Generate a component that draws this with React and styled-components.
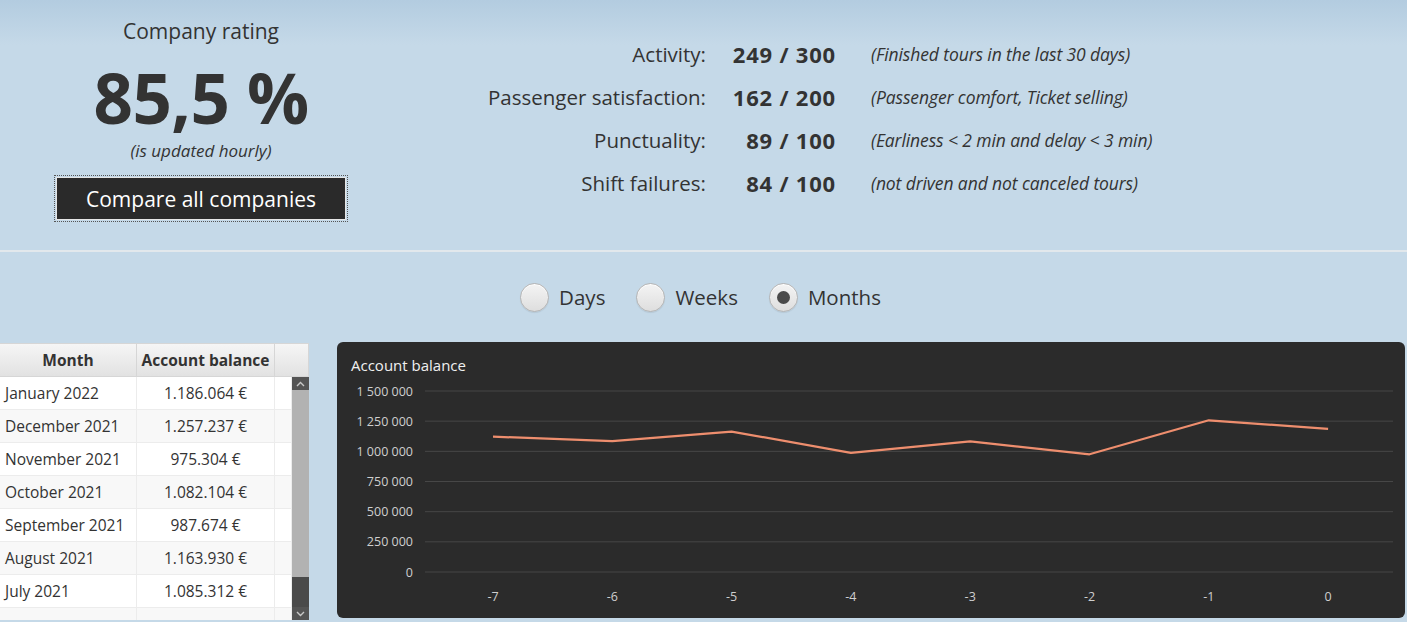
import styled, { createGlobalStyle } from "styled-components";

const GlobalStyle = createGlobalStyle`
  html, body {
    margin: 0;
    padding: 0;
  }
  body {
    font-family: "Open Sans", "Noto Sans", sans-serif;
    color: #333;
  }
`;

const Page = styled.div`
  width: 1407px;
  height: 622px;
  overflow: hidden;
  background: linear-gradient(180deg, #b3cce0 0px, #c5d9e8 45px, #c5d9e8 100%);
  display: flex;
  flex-direction: column;
`;

const Top = styled.section`
  height: 250px;
  display: flex;
`;

const RatingBox = styled.div`
  width: 402px;
  display: flex;
  flex-direction: column;
  align-items: center;
  padding-top: 17px;
`;

const RatingTitle = styled.div`
  font-size: 21px;
  line-height: 28px;
`;

const RatingValue = styled.div`
  margin-top: 20px;
  font-size: 69px;
  font-weight: 700;
  line-height: 64px;
  letter-spacing: -0.5px;
`;

const RatingNote = styled.div`
  margin-top: 11px;
  font-size: 17px;
  font-style: italic;
  line-height: 22px;
`;

const CompareButton = styled.button`
  margin-top: 15px;
  width: 290px;
  height: 43px;
  background: #2a2a2a;
  color: #fff;
  border: 1px solid #e6e6e6;
  outline: 1px dotted #555;
  outline-offset: 1px;
  font-family: inherit;
  font-size: 21px;
  cursor: pointer;
`;

const Stats = styled.div`
  margin-left: 72px;
  padding-top: 32px;
  display: grid;
  grid-template-columns: 232px 130px auto;
  grid-auto-rows: 43px;
  align-items: center;
`;

const StatLabel = styled.div`
  font-size: 20.5px;
  text-align: right;
`;

const StatValue = styled.div`
  font-size: 22px;
  font-weight: 700;
  letter-spacing: 0.8px;
  text-align: right;
`;

const StatNote = styled.div`
  padding-left: 35px;
  font-size: 17.5px;
  font-style: italic;
  letter-spacing: -0.1px;
`;

const Divider = styled.hr`
  margin: 0;
  border: none;
  height: 2px;
  background: #e2e8ec;
`;

const Bottom = styled.section`
  flex: 1;
  display: flex;
  flex-direction: column;
`;

const RadioRow = styled.div`
  height: 90px;
  display: flex;
  justify-content: center;
  align-items: center;
  gap: 31px;
  padding-right: 6px;
`;

const RadioItem = styled.label`
  display: flex;
  align-items: center;
  gap: 10px;
  font-size: 20.5px;
  cursor: pointer;
`;

const RadioCircle = styled.span`
  width: 29px;
  height: 29px;
  box-sizing: border-box;
  border-radius: 50%;
  border: 1px solid #b4b4b4;
  background: linear-gradient(180deg, #f4f4f4 0%, #dedede 100%);
  box-shadow: inset 0 1px 1px #fff, 0 1px 1px rgba(0, 0, 0, 0.08);
  display: flex;
  align-items: center;
  justify-content: center;

  &::after {
    content: "";
    width: 13px;
    height: 13px;
    border-radius: 50%;
    background: ${(p) => (p.$checked ? "#4a4a4a" : "transparent")};
  }
`;

const Content = styled.div`
  flex: 1;
  display: flex;
  gap: 28px;
  padding-right: 2px;
`;

const Table = styled.div`
  width: 309px;
  height: 277px;
  margin-top: 1px;
  background: #fff;
  display: flex;
  flex-direction: column;
  font-size: 15.5px;
`;

const HeaderRow = styled.div`
  height: 33px;
  display: grid;
  grid-template-columns: 137px 138px 34px;
  background: linear-gradient(180deg, #f6f6f6 0%, #e2e2e2 100%);
  border-bottom: 1px solid #d6d6d6;
`;

const HeaderCell = styled.div`
  font-weight: 700;
  text-align: center;
  line-height: 32px;
  border-right: 1px solid #d6d6d6;
  border-top: 1px solid #d6d6d6;
  white-space: nowrap;
`;

const Body = styled.div`
  flex: 1;
  display: flex;
  overflow: hidden;
`;

const Rows = styled.div`
  width: 292px;
`;

const Row = styled.div`
  height: 33px;
  display: grid;
  grid-template-columns: 137px 138px 17px;
  background: ${(p) => (p.$odd ? "#f8f8f8" : "#fff")};
  border-bottom: 1px solid #ececec;
  box-sizing: border-box;
`;

const Cell = styled.div`
  line-height: 32px;
  padding: 0 5px;
  text-align: ${(p) => (p.$center ? "center" : "left")};
  border-right: 1px solid #ececec;
  white-space: nowrap;
`;

const Scrollbar = styled.div`
  width: 17px;
  display: flex;
  flex-direction: column;
  background: #b2b2b2;
`;

const ScrollButton = styled.div`
  height: 13px;
  background: #545454;
  display: flex;
  align-items: center;
  justify-content: center;
`;

const ScrollTrack = styled.div`
  flex: 1;
  display: flex;
  flex-direction: column;
  justify-content: flex-end;
`;

const ScrollThumb = styled.div`
  height: 30px;
  background: #4a4a4a;
`;

const ChartPanel = styled.div`
  flex: 1;
  height: 276px;
  background: #2b2b2b;
  border-radius: 6px;
  overflow: hidden;
`;

const months = [
  ["January 2022", "1.186.064 €"],
  ["December 2021", "1.257.237 €"],
  ["November 2021", "975.304 €"],
  ["October 2021", "1.082.104 €"],
  ["September 2021", "987.674 €"],
  ["August 2021", "1.163.930 €"],
  ["July 2021", "1.085.312 €"],
  ["", ""],
];

const stats = [
  ["Activity:", "249 / 300", "(Finished tours in the last 30 days)"],
  ["Passenger satisfaction:", "162 / 200", "(Passenger comfort, Ticket selling)"],
  ["Punctuality:", "89 / 100", "(Earliness < 2 min and delay < 3 min)"],
  ["Shift failures:", "84 / 100", "(not driven and not canceled tours)"],
];

const series = [1121480, 1085312, 1163930, 987674, 1082104, 975304, 1257237, 1186064];

const Chevron = ({ up }) => (
  <svg width="9" height="6" viewBox="0 0 9 6">
    <path
      d={up ? "M1 5 L4.5 1.5 L8 5" : "M1 1 L4.5 4.5 L8 1"}
      fill="none"
      stroke="#c8c8c8"
      strokeWidth="1.4"
    />
  </svg>
);

const Chart = () => {
  const top = 49;
  const bottom = 230;
  const left = 88;
  const right = 1056;
  const yOf = (v) => bottom - (v / 1500000) * (bottom - top);
  const xOf = (i) => 156 + i * 119.3;
  const ticks = [1500000, 1250000, 1000000, 750000, 500000, 250000, 0];
  const fmt = (v) => v.toLocaleString("en-US").replace(/,/g, " ");
  const points = series.map((v, i) => `${xOf(i)},${yOf(v)}`).join(" ");

  return (
    <svg width="1068" height="276" viewBox="0 0 1068 276">
      <text x="14" y="29" fill="#f0f0f0" fontSize="15" fontFamily="Open Sans, sans-serif">
        Account balance
      </text>
      {ticks.map((t) => (
        <g key={t}>
          <line x1={left} x2={right} y1={yOf(t)} y2={yOf(t)} stroke="#474747" strokeWidth="1" />
          <text
            x="76"
            y={yOf(t) + 4.5}
            fill="#cfcfcf"
            fontSize="12.5"
            textAnchor="end"
            fontFamily="Open Sans, sans-serif"
          >
            {fmt(t)}
          </text>
        </g>
      ))}
      {series.map((_, i) => (
        <text
          key={i}
          x={xOf(i)}
          y="259"
          fill="#cfcfcf"
          fontSize="12.5"
          textAnchor="middle"
          fontFamily="Open Sans, sans-serif"
        >
          {i - 7}
        </text>
      ))}
      <polyline points={points} fill="none" stroke="#ee8e6e" strokeWidth="2.2" strokeLinejoin="round" />
    </svg>
  );
};

export default function App() {
  return (
    <>
      <GlobalStyle />
      <Page>
        <Top>
          <RatingBox>
            <RatingTitle>Company rating</RatingTitle>
            <RatingValue>85,5 %</RatingValue>
            <RatingNote>(is updated hourly)</RatingNote>
            <CompareButton>Compare all companies</CompareButton>
          </RatingBox>
          <Stats>
            {stats.map(([label, value, note]) => (
              <>
                <StatLabel key={label}>{label}</StatLabel>
                <StatValue>{value}</StatValue>
                <StatNote>{note}</StatNote>
              </>
            ))}
          </Stats>
        </Top>
        <Divider />
        <Bottom>
          <RadioRow>
            <RadioItem>
              <RadioCircle />
              Days
            </RadioItem>
            <RadioItem>
              <RadioCircle />
              Weeks
            </RadioItem>
            <RadioItem>
              <RadioCircle $checked />
              Months
            </RadioItem>
          </RadioRow>
          <Content>
            <Table>
              <HeaderRow>
                <HeaderCell>Month</HeaderCell>
                <HeaderCell>Account balance</HeaderCell>
                <HeaderCell />
              </HeaderRow>
              <Body>
                <Rows>
                  {months.map(([m, b], i) => (
                    <Row key={i} $odd={i % 2 === 1}>
                      <Cell>{m}</Cell>
                      <Cell $center>{b}</Cell>
                      <Cell />
                    </Row>
                  ))}
                </Rows>
                <Scrollbar>
                  <ScrollButton>
                    <Chevron up />
                  </ScrollButton>
                  <ScrollTrack>
                    <ScrollThumb />
                  </ScrollTrack>
                  <ScrollButton>
                    <Chevron />
                  </ScrollButton>
                </Scrollbar>
              </Body>
            </Table>
            <ChartPanel>
              <Chart />
            </ChartPanel>
          </Content>
        </Bottom>
      </Page>
    </>
  );
}
